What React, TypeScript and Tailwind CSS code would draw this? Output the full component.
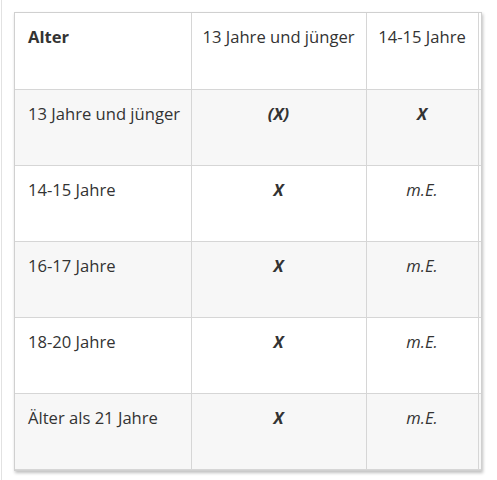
const rows = [
  { label: '13 Jahre und jünger', a: '(X)', aBold: true, b: 'X', bBold: true },
  { label: '14-15 Jahre', a: 'X', aBold: true, b: 'm.E.', bBold: false },
  { label: '16-17 Jahre', a: 'X', aBold: true, b: 'm.E.', bBold: false },
  { label: '18-20 Jahre', a: 'X', aBold: true, b: 'm.E.', bBold: false },
  { label: 'Älter als 21 Jahre', a: 'X', aBold: true, b: 'm.E.', bBold: false },
]

export default function App() {
  return (
    <div className="w-[497px] h-[480px] bg-white font-['Open_Sans',sans-serif] text-[16.6px] text-[#333] relative">
      <div className="absolute left-[1px] top-0 bottom-0 w-px bg-[#e2e2e2]" />
      <div className="pl-[14px] pt-[12px]">
        <div className="w-[468px] overflow-hidden border border-[#d0d0d0] shadow-[1px_2px_3px_rgba(0,0,0,0.25)]">
          <table className="border-collapse table-fixed w-[580px] whitespace-nowrap">
            <colgroup>
              <col className="w-[176px]" />
              <col className="w-[175px]" />
              <col className="w-[112px]" />
              <col className="w-[117px]" />
            </colgroup>
            <thead>
              <tr className="h-[76px] bg-white">
                <th className="align-top text-left font-bold pl-[13px] pr-1 pt-[12px] border-r border-b border-[#d6d6d6]">Alter</th>
                <th className="align-top text-center font-normal px-1 pt-[12px] border-r border-b border-[#d6d6d6]">13 Jahre und jünger</th>
                <th className="align-top text-center font-normal px-1 pt-[12px] border-r border-b border-[#d6d6d6]">14-15 Jahre</th>
                <th className="border-b border-[#d6d6d6]" />
              </tr>
            </thead>
            <tbody>
              {rows.map((r, i) => (
                <tr key={r.label} className={`h-[76px] ${i % 2 === 0 ? 'bg-[#f7f7f7]' : 'bg-white'}`}>
                  <td className="align-top text-left pl-[13px] pr-1 pt-[12px] border-r border-b border-[#d6d6d6]">{r.label}</td>
                  <td className={`align-top text-center italic pt-[12px] border-r border-b border-[#d6d6d6] ${r.aBold ? 'font-bold' : ''}`}>{r.a}</td>
                  <td className={`align-top text-center italic pt-[12px] border-r border-b border-[#d6d6d6] ${r.bBold ? 'font-bold' : ''}`}>{r.b}</td>
                  <td className="border-b border-[#d6d6d6]" />
                </tr>
              ))}
            </tbody>
          </table>
        </div>
      </div>
    </div>
  )
}
